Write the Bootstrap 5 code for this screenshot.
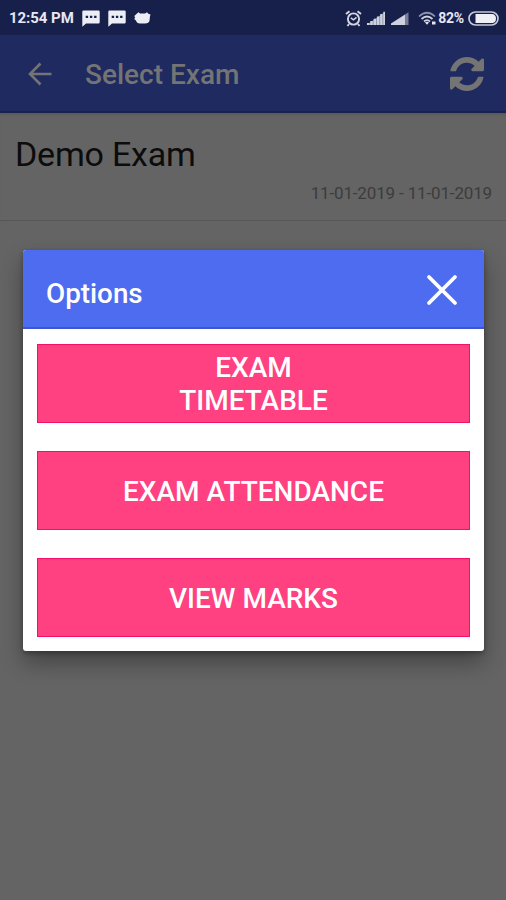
<!DOCTYPE html>
<html lang="en">
<head>
<meta charset="utf-8">
<meta name="viewport" content="width=device-width, initial-scale=1">
<title>Select Exam</title>
<link href="https://cdn.jsdelivr.net/npm/bootstrap@5.3.0/dist/css/bootstrap.min.css" rel="stylesheet">
<style>
body{font-family:Roboto,"Liberation Sans",sans-serif;background:#646464;color:#0c0c0c;height:900px;overflow:hidden;line-height:1}
svg{display:block;flex:none}
.status{height:35px;background:#171f4b;color:#e6e8f2;padding:1px 7px 0 9px}
.status-text{font-size:15px;font-weight:700;letter-spacing:-.05px;white-space:nowrap}
.pct{font-size:14px;font-weight:700;letter-spacing:-.2px}
.appbar{height:78px;background:#1f2a60;color:#747474;border-bottom:2px solid #19224e;padding:2px 22px 0 28px}
.appbar-title{font-size:28px;font-weight:500;margin-left:33px;padding-top:2px;white-space:nowrap}
.exam{height:108px;border-bottom:1px solid #575757;padding:22px 14px 0 15px;box-shadow:inset 0 3px 3px -2px #555}
.exam-name{font-size:34px;font-weight:400;letter-spacing:-.2px;line-height:38px}
.exam-date{font-size:17px;letter-spacing:-.15px;color:#3c3c3c;line-height:20px;margin-top:10px}
.dialog{top:250px;left:23px;width:461px;height:401px;border-radius:3px;box-shadow:0 12px 22px rgba(0,0,0,.32),0 2px 5px rgba(0,0,0,.3)}
.dialog-head{height:79px;background:#4e6cef;border-bottom:2px solid #3a56d4;padding:2px 26px 0 23px}
.dialog-title{font-size:27.8px;font-weight:500;padding-top:8px}
.options{padding:15px 14px;gap:28px}
.btn-option{height:79px;background:#ff4081;border:1px solid #f50f68;border-radius:0;color:#fff;font-size:28px;font-weight:500;line-height:33px;padding:1px 0 0;text-transform:uppercase;white-space:nowrap}
.btn-option.wraps{white-space:normal;padding:1px 130px 0}
.btn-option:hover{background:#f50057;color:#fff}
</style>
<script src="https://cdn.jsdelivr.net/npm/bootstrap@5.3.0/dist/js/bootstrap.bundle.min.js"></script>
</head>
<body class="position-relative">
<div class="status d-flex align-items-center justify-content-between">
  <div class="d-flex align-items-center">
    <span class="status-text">12:54 PM</span>
    <svg class="ms-2" width="18" height="17" viewBox="0 0 18 17"><path fill="#eceef5" d="M1.500.500h15q1.200 0 1.200 1.200v10.600q0 1.200-1.200 1.200H4L.3 16.800V1.700Q.3.500 1.500.500z"/><path fill="#171f4b" d="M3.700 5.800h2.400v2.200H3.700zm4.200 0h2.400v2.200H7.900zm4.200 0h2.400v2.200h-2.400z"/></svg>
    <svg class="ms-2" width="18" height="17" viewBox="0 0 18 17"><path fill="#eceef5" d="M1.500.500h15q1.200 0 1.200 1.200v10.600q0 1.200-1.200 1.200H4L.3 16.800V1.700Q.3.500 1.500.500z"/><path fill="#171f4b" d="M3.700 5.800h2.400v2.200H3.700zm4.200 0h2.400v2.200H7.900zm4.200 0h2.400v2.200h-2.400z"/></svg>
    <svg class="ms-2" width="17" height="12" viewBox="0 0 17 12"><path fill="#eceef5" d="M3 1.500 4.500.3 6 1.500h5L13 .2l1.300 1.500 2.200.8-.6 2.200-.3 3.500Q15 11.500 11 11.500H6Q2.700 11.500 2 8.500L.2 7l1-1.300L.3 4z"/></svg>
  </div>
  <div class="d-flex align-items-center">
    <svg width="17" height="17" viewBox="0 0 17 17" fill="none" stroke="#d4d7e3"><circle cx="8.500" cy="9" r="5.600" stroke-width="1.900"/><path d="m1 4 3.500-2.800M16 4l-3.500-2.800M4 14l-1.500 2M13 14l1.500 2" stroke-width="1.900"/><path d="m5.800 7.800 2.700 2 3-2.500" stroke-width="1.500"/></svg>
    <svg width="20" height="15" viewBox="0 0 20 15" class="ms-1"><path fill="#8c92aa" d="M.5 14 19 1v13z"/><path fill="#ced2de" d="M1 12h2.400v2H1zm3.300-2h2.400v4H4.300zm3.300-2.300H10V14H7.600zm3.300-2.300h2.400V14h-2.400zm3.300-2.300h2.200V14h-2.200zm3.100-2.300H19V14h-1.700z"/></svg>
    <svg width="20" height="15" viewBox="0 0 20 15" class="ms-1"><path fill="#ced2de" d="M1 14v-1.500L15 3.500V14z"/><path fill="#777d98" d="m15 3.500 3.500-2.200V14H15z"/></svg>
    <svg width="20" height="15" viewBox="0 0 20 15" class="ms-2" fill="none"><path stroke="#8c92aa" stroke-width="1.700" d="M1 5.500Q9-2 17 5.500"/><path stroke="#ced2de" stroke-width="1.800" d="M3.500 8q5.500-5 11 0M6 10.500q3-2.700 6 0"/><path fill="#e3e5ee" d="m7 11.500 2 2.300 2-2.300q-2-1.500-4 0zM14 10.500h3.500v3H14z"/></svg>
    <span class="pct">82%</span>
    <svg class="ms-1" width="31" height="15" viewBox="0 0 31 15"><rect x="1" y="1" width="29" height="13" rx="6.500" fill="none" stroke="#c5c9d8" stroke-width="1.700"/><path fill="#eef0f6" d="M7.500 3h17Q28 3.500 28 7.500T24.500 12h-17z"/></svg>
  </div>
</div>
<header class="appbar d-flex align-items-center">
  <svg width="24" height="24" viewBox="0 0 24 24" fill="none" stroke="#747474" stroke-width="2.600"><path d="M23.500 12H3M12.500 1.500 2 12l10.500 10.500"/></svg>
  <div class="appbar-title">Select Exam</div>
  <svg class="ms-auto" width="34" height="34" viewBox="0 0 1536 1536"><path fill="#747474" d="M1511 928q0 5-1 7-64 268-268 434.500T764 1536q-146 0-282.500-55T238 1324l-129 129q-19 19-45 19t-45-19-19-45V960q0-26 19-45t45-19h448q26 0 45 19t19 45-19 45l-137 137q71 66 161 102t187 36q134 0 250-65t186-179q11-17 53-117 8-23 30-23h192q13 0 22.500 9.500t9.500 22.500zm25-800v448q0 26-19 45t-45 19h-448q-26 0-45-19t-19-45 19-45l138-138Q969 256 768 256q-134 0-250 65T332 500q-11 17-53 117-8 23-30 23H50q-13 0-22.500-9.500T18 608v-7q65-268 270-434.500T768 0q146 0 284 55.500T1297 212l130-129q19-19 45-19t45 19 19 45z"/></svg>
</header>
<main class="exam d-flex flex-column">
  <div class="exam-name">Demo Exam</div>
  <div class="exam-date align-self-end">11-01-2019 - 11-01-2019</div>
</main>
<section class="dialog position-absolute bg-white overflow-hidden">
  <div class="dialog-head d-flex align-items-center justify-content-between text-white">
    <div class="dialog-title">Options</div>
    <svg width="32" height="32" viewBox="0 0 32 32" fill="none" stroke="#fff" stroke-width="3.800" stroke-linecap="round"><path d="m3 3 26 26M29 3 3 29"/></svg>
  </div>
  <div class="options d-flex flex-column">
    <button class="btn btn-option wraps" type="button">Exam Timetable</button>
    <button class="btn btn-option" type="button">Exam Attendance</button>
    <button class="btn btn-option" type="button">View Marks</button>
  </div>
</section>
</body>
</html>
